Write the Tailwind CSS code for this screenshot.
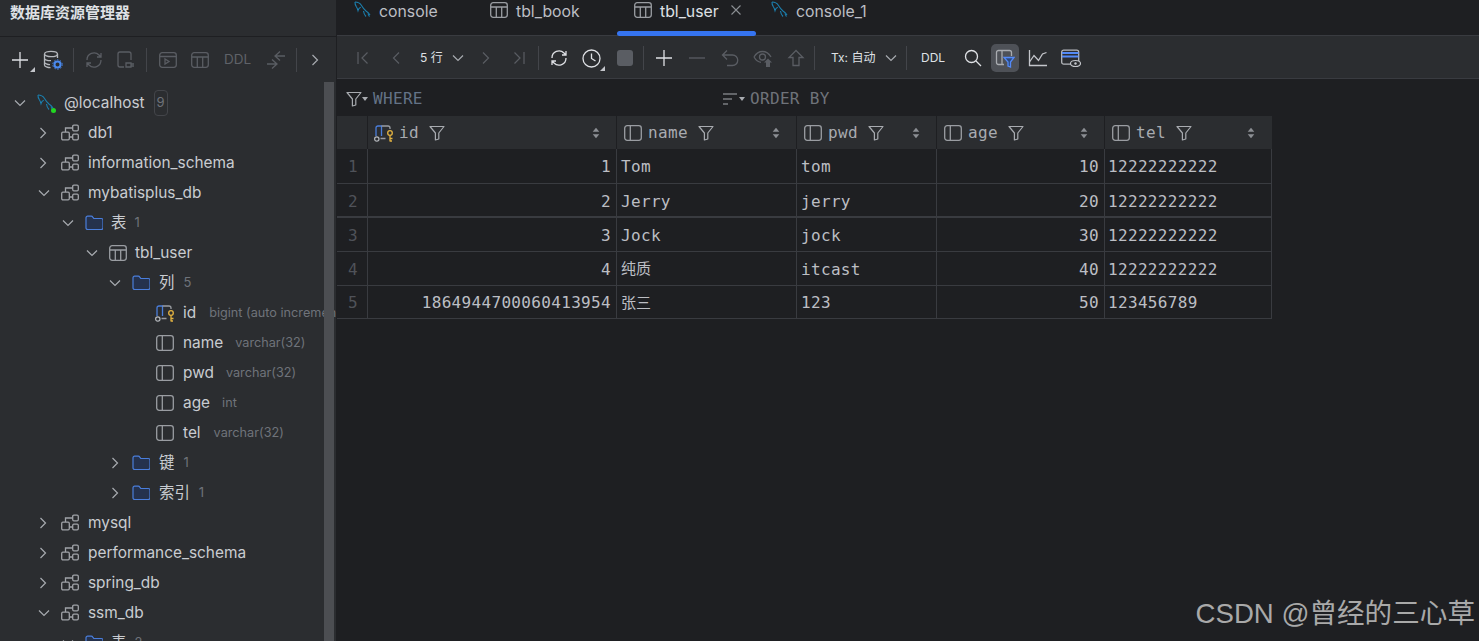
<!DOCTYPE html>
<html lang="zh">
<head>
<meta charset="utf-8">
<title>数据库资源管理器</title>
<script src="https://cdn.jsdelivr.net/npm/@tailwindcss/browser@4"></script>
</head>
<body class="m-0 bg-[#1e1f22]">
<svg width="0" height="0" class="absolute">
  <defs>
    <symbol id="chevD" viewBox="0 0 12 12"><path d="M1 3.500 6 8.500 11 3.500" fill="none" stroke="#a8abb0" stroke-width="1.200"/></symbol>
    <symbol id="chevR" viewBox="0 0 12 12"><path d="M3.500 1 8.500 6 3.500 11" fill="none" stroke="#a8abb0" stroke-width="1.200"/></symbol>
    <symbol id="schema" viewBox="0 0 18 18" fill="none" stroke="#a0a3a8" stroke-width="1.300"><rect x=".7" y="8.200" width="7.600" height="7.600" rx="1.200"/><rect x="11.700" y="1.200" width="5.600" height="5.600" rx="1.200"/><rect x="11.700" y="10.200" width="5.600" height="5.600" rx="1.200"/><path d="M4.500 8V4h7M8.300 13h3.400"/></symbol>
    <symbol id="folder" viewBox="0 0 18 18"><path d="M1 4c0-1 .7-1.800 1.700-1.800h3.600c.7 0 1.100.3 1.500.9l1 1.400h7.500c.9 0 1.700.7 1.700 1.700v7.600c0 1-.8 1.700-1.700 1.700H2.700C1.700 15.500 1 14.800 1 13.800Z" fill="#25324d" stroke="#4a7edb" stroke-width="1.200"/></symbol>
    <symbol id="table" viewBox="0 0 18 18" fill="none" stroke="#9a9da2" stroke-width="1.300"><rect x=".7" y="1.700" width="16.600" height="14.600" rx="2.500"/><path d="M1 6h16M6.300 6v10M11.700 6v10"/></symbol>
    <symbol id="column" viewBox="0 0 18 18" fill="none" stroke="#9a9da2" stroke-width="1.300"><rect x=".7" y="1.700" width="16.600" height="14.600" rx="2.500"/><path d="M6.300 2v14"/></symbol>
    <symbol id="pk" viewBox="0 0 20 18" fill="none"><path d="M2 12V4c0-1.300 .8-2 2-2h3.500v10" stroke="#4a7edb" stroke-width="1.300"/><path d="M7.500 2H14c1.200 0 2 .7 2 2v1M6.500 14.500h5" stroke="#9a9da2" stroke-width="1.300"/><circle cx="2.800" cy="15" r="2.200" stroke="#b5b8bd" stroke-width="1.200"/><circle cx="16" cy="9" r="2.300" stroke="#e3b341" stroke-width="1.300"/><path d="M16 11.500V17.500M16 14.500h2.500M16 17h2" stroke="#e3b341" stroke-width="1.300"/></symbol>
    <symbol id="dolphin" viewBox="0 0 18 18" fill="none" stroke="#1b7fae" stroke-width="1.100"><path d="M1 1c3 0 5 1 6.500 3.500 1.200 2 2.500 4 4.500 5.500 1.500 1 2.800 2 4 4"/><path d="M1 1c-.2 2 .5 3.500 1.500 5 .7 1 1.200 2.300 1.500 3.500.5-1.800 1.200-2.800 2.800-3.200M9.500 10c.3 2.500 1 4 2.500 5.500M14 12.500c.3 1.300 .8 2.300 1.500 3"/></symbol>
    <symbol id="filter" viewBox="0 0 16 16"><path d="M1 1.500h14L9.800 8v6L6.400 15V8Z" fill="none" stroke="#a8abb0" stroke-width="1.200" stroke-linejoin="round"/></symbol>
    <symbol id="sort" viewBox="0 0 8 12"><path d="M4 .8 7.300 4.800H.7ZM4 11.200 .7 7.200h6.600Z" fill="#8c8f94"/></symbol>
    <symbol id="corner" viewBox="0 0 5 5"><path d="M5 0V5H0Z" fill="#c4c6cb"/></symbol>
  </defs>
</svg>

<div class="relative flex h-[641px] w-[1479px] overflow-hidden bg-[#1e1f22] font-['Inter','Noto_Sans_CJK_SC',sans-serif] text-[15.400px] text-[#c9ccd1]">

  <!-- sidebar -->
  <aside class="relative flex h-full w-[337px] shrink-0 flex-col overflow-hidden border-r border-[#1e1f22] bg-[#2b2d30]">
    <div class="flex h-[37px] shrink-0 border-b border-[#1e1f22] pl-[10px] pt-[3px] text-[15px] leading-[20px] font-semibold text-[#dfe1e5]">数据库资源管理器</div>
    <div class="flex h-[46px] shrink-0 items-center pl-[8px]">
      <span class="relative flex w-[24px] justify-center">
        <svg class="h-[18px] w-[18px]" viewBox="0 0 18 18"><path d="M9 1v16M1 9h16" stroke="#dfe1e5" stroke-width="1.300"/></svg>
        <svg class="absolute right-[-3px] bottom-[-3px] h-[5px] w-[5px]"><use href="#corner"/></svg>
      </span>
      <span class="ml-[8px] flex w-[26px] justify-center">
        <svg class="h-[20px] w-[20px]" viewBox="0 0 20 20" fill="none"><ellipse cx="8" cy="4" rx="6.500" ry="2.700" stroke="#b5b8bd" stroke-width="1.300"/><path d="M1.500 4v11c0 1.500 3 2.700 6 2.700M14.500 4v4M1.500 8c0 1.500 3 2.700 6.500 2.700M1.500 12c0 1.500 3 2.700 5.500 2.700" stroke="#b5b8bd" stroke-width="1.300"/><circle cx="14.500" cy="14.500" r="3" stroke="#4a8af0" stroke-width="2"/><circle cx="14.500" cy="14.500" r="4.700" stroke="#4a8af0" stroke-width="1" stroke-dasharray="1.500 1.500"/></svg>
      </span>
      <span class="ml-[7px] mr-[8px] h-[24px] w-px bg-[#43454a]"></span>
      <span class="flex w-[24px] justify-center">
        <svg class="h-[20px] w-[20px]" viewBox="0 0 20 20" fill="none" stroke="#5a5d63" stroke-width="1.300"><path d="M3 10a7 7 0 0 1 12-5l2 2M17 10a7 7 0 0 1-12 5l-2-2M17 3v4h-4M3 17v-4h4"/></svg>
      </span>
      <span class="ml-[8px] flex w-[24px] justify-center">
        <svg class="h-[20px] w-[20px]" viewBox="0 0 20 20" fill="none" stroke="#5a5d63" stroke-width="1.300"><path d="M8 17H4c-1.200 0-2-.8-2-2V4c0-1.200 .8-2 2-2h9c1.200 0 2 .8 2 2v6"/><path d="M10 13h5v4h-5zM15 14h3M15 16h3"/></svg>
      </span>
      <span class="mx-[8px] h-[24px] w-px bg-[#43454a]"></span>
      <span class="flex w-[26px] justify-center">
        <svg class="h-[18px] w-[18px]" viewBox="0 0 18 18" fill="none" stroke="#5a5d63" stroke-width="1.300"><rect x=".7" y="1.700" width="16.600" height="14.600" rx="2.500"/><path d="M1 5.500h16M6 8v5l4-2.500Z"/></svg>
      </span>
      <span class="ml-[6px] flex w-[26px] justify-center">
        <svg class="h-[18px] w-[18px]" viewBox="0 0 18 18" fill="none" stroke="#5a5d63" stroke-width="1.300"><rect x=".7" y="1.700" width="16.600" height="14.600" rx="2.500"/><path d="M1 6h16M6.300 6v10M11.700 6v10"/></svg>
      </span>
      <span class="ml-[11px] text-[13.500px] leading-none text-[#5f6268]">DDL</span>
      <span class="ml-[13px] flex w-[24px] justify-center">
        <svg class="h-[20px] w-[20px]" viewBox="0 0 20 20" fill="none" stroke="#5a5d63" stroke-width="1.300"><path d="M9 6h10M14 1.500 9 6l5 4.500M1 14h10M6 9.500 11 14l-5 4.500"/></svg>
      </span>
      <span class="ml-[8px] h-[24px] w-px bg-[#43454a]"></span>
      <span class="ml-[6px] flex w-[24px] justify-center"><svg class="h-[12px] w-[12px]"><use href="#chevR"/></svg></span>
    </div>

    <div class="flex flex-col pt-[5px]">
      <div class="flex h-[30px] shrink-0 items-center whitespace-nowrap pl-[14px]"><svg class="h-[12px] w-[12px] shrink-0"><use href="#chevD"/></svg>
        <span class="relative ml-[11px] h-[18px] w-[18px] shrink-0"><svg class="h-[18px] w-[18px]"><use href="#dolphin"/></svg><span class="absolute right-[-1px] bottom-[-1px] h-[5px] w-[5px] rounded-full bg-[#22d622]"></span></span>
        <span class="ml-[9px]">@localhost</span><span class="ml-[9px] flex h-[26px] w-[14px] items-center justify-center rounded-[4px] border border-[#43454a] text-[13px] text-[#6f737a]">9</span></div>
      <div class="flex h-[30px] shrink-0 items-center whitespace-nowrap pl-[38px]"><svg class="h-[12px] w-[12px] shrink-0 -translate-x-[1px]"><use href="#chevR"/></svg><svg class="ml-[11px] h-[18px] w-[18px] shrink-0"><use href="#schema"/></svg><span class="ml-[9px]">db1</span></div>
      <div class="flex h-[30px] shrink-0 items-center whitespace-nowrap pl-[38px]"><svg class="h-[12px] w-[12px] shrink-0 -translate-x-[1px]"><use href="#chevR"/></svg><svg class="ml-[11px] h-[18px] w-[18px] shrink-0"><use href="#schema"/></svg><span class="ml-[9px]">information_schema</span></div>
      <div class="flex h-[30px] shrink-0 items-center whitespace-nowrap pl-[38px]"><svg class="h-[12px] w-[12px] shrink-0"><use href="#chevD"/></svg><svg class="ml-[11px] h-[18px] w-[18px] shrink-0"><use href="#schema"/></svg><span class="ml-[9px]">mybatisplus_db</span></div>
      <div class="flex h-[30px] shrink-0 items-center whitespace-nowrap pl-[62px]"><svg class="h-[12px] w-[12px] shrink-0"><use href="#chevD"/></svg><svg class="ml-[11px] h-[18px] w-[18px] shrink-0"><use href="#folder"/></svg><span class="ml-[8px]">表</span><span class="ml-[8px] text-[13px] text-[#6f737a]">1</span></div>
      <div class="flex h-[30px] shrink-0 items-center whitespace-nowrap pl-[86px]"><svg class="h-[12px] w-[12px] shrink-0"><use href="#chevD"/></svg><svg class="ml-[11px] h-[18px] w-[18px] shrink-0"><use href="#table"/></svg><span class="ml-[8px]">tbl_user</span></div>
      <div class="flex h-[30px] shrink-0 items-center whitespace-nowrap pl-[109px]"><svg class="h-[12px] w-[12px] shrink-0"><use href="#chevD"/></svg><svg class="ml-[11px] h-[18px] w-[18px] shrink-0"><use href="#folder"/></svg><span class="ml-[9px]">列</span><span class="ml-[9px] text-[13px] text-[#6f737a]">5</span></div>
      <div class="flex h-[30px] shrink-0 items-center whitespace-nowrap pl-[155px]"><svg class="h-[18px] w-[20px] shrink-0"><use href="#pk"/></svg><span class="ml-[8px]">id</span><span class="ml-[13px] text-[12.700px] text-[#6f737a]">bigint (auto increment)</span></div>
      <div class="flex h-[30px] shrink-0 items-center whitespace-nowrap pl-[156px]"><svg class="h-[18px] w-[18px] shrink-0"><use href="#column"/></svg><span class="ml-[9px]">name</span><span class="ml-[12px] text-[12.700px] text-[#6f737a]">varchar(32)</span></div>
      <div class="flex h-[30px] shrink-0 items-center whitespace-nowrap pl-[156px]"><svg class="h-[18px] w-[18px] shrink-0"><use href="#column"/></svg><span class="ml-[9px]">pwd</span><span class="ml-[12px] text-[12.700px] text-[#6f737a]">varchar(32)</span></div>
      <div class="flex h-[30px] shrink-0 items-center whitespace-nowrap pl-[156px]"><svg class="h-[18px] w-[18px] shrink-0"><use href="#column"/></svg><span class="ml-[9px]">age</span><span class="ml-[12px] text-[12.700px] text-[#6f737a]">int</span></div>
      <div class="flex h-[30px] shrink-0 items-center whitespace-nowrap pl-[156px]"><svg class="h-[18px] w-[18px] shrink-0"><use href="#column"/></svg><span class="ml-[9px]">tel</span><span class="ml-[13px] text-[12.700px] text-[#6f737a]">varchar(32)</span></div>
      <div class="flex h-[30px] shrink-0 items-center whitespace-nowrap pl-[109px]"><svg class="h-[12px] w-[12px] shrink-0"><use href="#chevR"/></svg><svg class="ml-[11px] h-[18px] w-[18px] shrink-0"><use href="#folder"/></svg><span class="ml-[9px]">键</span><span class="ml-[9px] text-[13px] text-[#6f737a]">1</span></div>
      <div class="flex h-[30px] shrink-0 items-center whitespace-nowrap pl-[109px]"><svg class="h-[12px] w-[12px] shrink-0"><use href="#chevR"/></svg><svg class="ml-[11px] h-[18px] w-[18px] shrink-0"><use href="#folder"/></svg><span class="ml-[9px]">索引</span><span class="ml-[9px] text-[13px] text-[#6f737a]">1</span></div>
      <div class="flex h-[30px] shrink-0 items-center whitespace-nowrap pl-[38px]"><svg class="h-[12px] w-[12px] shrink-0 -translate-x-[1px]"><use href="#chevR"/></svg><svg class="ml-[11px] h-[18px] w-[18px] shrink-0"><use href="#schema"/></svg><span class="ml-[9px]">mysql</span></div>
      <div class="flex h-[30px] shrink-0 items-center whitespace-nowrap pl-[38px]"><svg class="h-[12px] w-[12px] shrink-0 -translate-x-[1px]"><use href="#chevR"/></svg><svg class="ml-[11px] h-[18px] w-[18px] shrink-0"><use href="#schema"/></svg><span class="ml-[9px]">performance_schema</span></div>
      <div class="flex h-[30px] shrink-0 items-center whitespace-nowrap pl-[38px]"><svg class="h-[12px] w-[12px] shrink-0 -translate-x-[1px]"><use href="#chevR"/></svg><svg class="ml-[11px] h-[18px] w-[18px] shrink-0"><use href="#schema"/></svg><span class="ml-[9px]">spring_db</span></div>
      <div class="flex h-[30px] shrink-0 items-center whitespace-nowrap pl-[38px]"><svg class="h-[12px] w-[12px] shrink-0"><use href="#chevD"/></svg><svg class="ml-[11px] h-[18px] w-[18px] shrink-0"><use href="#schema"/></svg><span class="ml-[9px]">ssm_db</span></div>
      <div class="flex h-[30px] shrink-0 items-center whitespace-nowrap pl-[62px]"><svg class="h-[12px] w-[12px] shrink-0"><use href="#chevD"/></svg><svg class="ml-[11px] h-[18px] w-[18px] shrink-0"><use href="#folder"/></svg><span class="ml-[8px]">表</span><span class="ml-[8px] text-[13px] text-[#6f737a]">2</span></div>
    </div>
    <!-- scrollbar over the tree -->
    <div class="absolute top-[82px] right-[2px] bottom-0 w-[10px] bg-[#4c4e52]"></div>
  </aside>

  <!-- main -->
  <main class="flex min-w-0 flex-1 flex-col">
    <!-- tabs -->
    <div class="flex h-[36px] shrink-0 border-b border-[#393b40] text-[15.800px] text-[#bcbec4]">
      <div class="flex h-[35px] w-[136px] shrink-0 items-start pt-[2px] pl-[17px]"><svg class="mt-[-1px] h-[18px] w-[18px] shrink-0"><use href="#dolphin"/></svg><span class="ml-[7px] leading-[20px]">console</span></div>
      <div class="flex h-[35px] w-[144px] shrink-0 items-start pt-[2px] pl-[17px]"><svg class="mt-[-1px] h-[18px] w-[18px] shrink-0"><use href="#table"/></svg><span class="ml-[8px] leading-[20px]">tbl_book</span></div>
      <div class="relative flex h-[35px] w-[139px] shrink-0 items-start pt-[2px] pl-[17px] text-[#dfe1e5]"><svg class="mt-[-1px] h-[18px] w-[18px] shrink-0"><use href="#table"/></svg><span class="ml-[8px] leading-[20px]">tbl_user</span>
        <svg class="absolute top-[5px] left-[114px] h-[10px] w-[10px]" viewBox="0 0 10 10"><path d="M.5.5l9 9M9.500.5l-9 9" stroke="#8c8f94" stroke-width="1.100"/></svg>
        <span class="absolute bottom-[-1px] left-0 h-[5px] w-[139px] rounded-[3px] bg-[#3574f0]"></span></div>
      <div class="flex h-[35px] shrink-0 items-start pt-[2px] pl-[15px]"><svg class="mt-[-1px] h-[18px] w-[18px] shrink-0"><use href="#dolphin"/></svg><span class="ml-[7px] leading-[20px]">console_1</span></div>
    </div>

    <!-- toolbar -->
    <div class="flex h-[43px] shrink-0 items-center border-b border-[#393b40] bg-[#2b2d30] pt-[2px] pl-[9px] text-[12px] text-[#dfe1e5]">
      <span class="flex w-[33px] justify-center"><svg class="h-[14px] w-[14px]" viewBox="0 0 14 14" fill="none" stroke="#5a5d63" stroke-width="1.200"><path d="M2 1v12M11.500 1.500 6 7l5.500 5.500"/></svg></span>
      <span class="flex w-[33px] justify-center"><svg class="h-[14px] w-[14px]" viewBox="0 0 14 14" fill="none" stroke="#5a5d63" stroke-width="1.200"><path d="M10 1.500 4.500 7l5.500 5.500"/></svg></span>
      <span class="flex w-[57px] items-center whitespace-nowrap pl-[8px]">5 行<svg class="ml-[9px] h-[12px] w-[12px]"><use href="#chevD"/></svg></span>
      <span class="flex w-[33px] justify-center"><svg class="h-[14px] w-[14px]" viewBox="0 0 14 14" fill="none" stroke="#5a5d63" stroke-width="1.200"><path d="M4 1.500 9.500 7 4 12.500"/></svg></span>
      <span class="flex w-[33px] justify-center"><svg class="h-[14px] w-[14px]" viewBox="0 0 14 14" fill="none" stroke="#5a5d63" stroke-width="1.200"><path d="M12 1v12M2.500 1.500 8 7l-5.500 5.500"/></svg></span>
      <span class="mx-[3px] h-[24px] w-px bg-[#43454a]"></span>
      <span class="flex w-[33px] justify-center"><svg class="h-[20px] w-[20px]" viewBox="0 0 20 20" fill="none" stroke="#dfe1e5" stroke-width="1.300"><path d="M3 10a7 7 0 0 1 12-5l2 2M17 10a7 7 0 0 1-12 5l-2-2M17 3v4h-4M3 17v-4h4"/></svg></span>
      <span class="relative flex w-[33px] justify-center"><svg class="h-[19px] w-[19px]" viewBox="0 0 19 19" fill="none" stroke="#dfe1e5" stroke-width="1.300"><circle cx="9.500" cy="9.500" r="8.500"/><path d="M9.500 4.500v5l4 2.500"/></svg><svg class="absolute right-[3px] bottom-[-3px] h-[5px] w-[5px]"><use href="#corner"/></svg></span>
      <span class="flex w-[33px] justify-center"><span class="h-[16px] w-[16px] rounded-[3px] bg-[#5a5d63]"></span></span>
      <span class="ml-[2px] mr-[3px] h-[24px] w-px bg-[#43454a]"></span>
      <span class="flex w-[33px] justify-center"><svg class="h-[18px] w-[18px]" viewBox="0 0 18 18"><path d="M9 1v16M1 9h16" stroke="#dfe1e5" stroke-width="1.300"/></svg></span>
      <span class="flex w-[33px] justify-center"><svg class="h-[18px] w-[18px]" viewBox="0 0 18 18"><path d="M1 9h16" stroke="#5a5d63" stroke-width="1.300"/></svg></span>
      <span class="flex w-[33px] justify-center"><svg class="h-[18px] w-[18px]" viewBox="0 0 18 18" fill="none" stroke="#5a5d63" stroke-width="1.300"><path d="M6 1.500 1.500 6 6 10.500M2 6h9.500a5 5 0 0 1 0 10.500H6"/></svg></span>
      <span class="flex w-[33px] justify-center"><svg class="h-[20px] w-[20px]" viewBox="0 0 20 20" fill="none" stroke="#5a5d63" stroke-width="1.300"><path d="M1 9c2-3.500 5-5.500 8.500-5.500S16 5.500 18 9"/><path d="M1 9c2 3.500 4.500 5 7 5.300"/><circle cx="9.500" cy="9" r="3"/><path d="M15 10.500 19 14.500H17V19H13V14.500H11Z" fill="#5a5d63" stroke="none"/></svg></span>
      <span class="flex w-[33px] justify-center"><svg class="h-[18px] w-[18px]" viewBox="0 0 18 18" fill="none" stroke="#5a5d63" stroke-width="1.300"><path d="M9 1.500 2 8.500h4v8h6v-8h4Z"/></svg></span>
      <span class="mx-[2px] h-[24px] w-px bg-[#43454a]"></span>
      <span class="flex w-[84px] items-center whitespace-nowrap pl-[14px]">Tx: 自动<svg class="ml-[10px] h-[12px] w-[12px]"><use href="#chevD"/></svg></span>
      <span class="mx-[5px] h-[24px] w-px bg-[#43454a]"></span>
      <span class="w-[44px] pl-[9px]">DDL</span>
      <span class="flex w-[33px] justify-center"><svg class="h-[18px] w-[18px]" viewBox="0 0 18 18" fill="none" stroke="#dfe1e5" stroke-width="1.300"><circle cx="7.500" cy="7.500" r="6"/><path d="m12 12 5 5"/></svg></span>
      <span class="ml-[2px] flex h-[28px] w-[28px] items-center justify-center rounded-[5px] bg-[#4e5157]"><svg class="h-[20px] w-[20px]" viewBox="0 0 20 20" fill="none"><path d="M9 16.500H3.500C2 16.500 1.500 15.500 1.500 14.500V4.500C1.500 3 2.500 2.500 3.500 2.500h11c1.500 0 2 1 2 2V8M7 3v13.500" stroke="#a8abb0" stroke-width="1.300"/><path d="M9 9.500h10L15.500 14v5L13 18v-4Z" fill="#2b4a80" stroke="#548af7" stroke-width="1.300"/></svg></span>
      <span class="ml-[3px] flex w-[32px] justify-center"><svg class="h-[20px] w-[20px]" viewBox="0 0 20 20" fill="none" stroke="#c4c6cb" stroke-width="1.300"><path d="M1.500 2v15.500H19"/><path d="M1.500 14 6 7.500l4.500 5 4-6.500 4-1.500"/></svg></span>
      <span class="flex w-[33px] justify-center"><svg class="h-[20px] w-[20px]" viewBox="0 0 20 20" fill="none"><rect x=".7" y="2.200" width="17" height="14" rx="2" stroke="#b5b8bd" stroke-width="1.300"/><path d="M1 5h16.500M1 8.500h16.500" stroke="#548af7" stroke-width="2"/><ellipse cx="14.500" cy="15.500" rx="5" ry="3" fill="#2b2d30" stroke="#c4c6cb" stroke-width="1.200"/><circle cx="14.500" cy="15.500" r="1.200" fill="#c4c6cb"/></svg></span>
    </div>

    <!-- filters -->
    <div class="flex h-[37px] shrink-0 items-center pt-[2px] font-['DejaVu_Sans_Mono','Noto_Sans_CJK_SC',monospace] text-[16px] tracking-[0.33px]">
      <div class="flex w-[385px] items-center pl-[9px]">
        <svg class="h-[16px] w-[16px]" viewBox="0 0 16 16"><use href="#filter"/></svg>
        <svg class="h-[4px] w-[6px]" viewBox="0 0 6 4"><path d="M0 0h6L3 4Z" fill="#a8abb0"/></svg>
        <span class="ml-[5px] text-[#647387]">WHERE</span>
      </div>
      <div class="flex items-center">
        <svg class="h-[14px] w-[16px]" viewBox="0 0 16 14"><path d="M1 2h14M1 7h9M1 12h5" stroke="#a8abb0" stroke-width="1.200"/></svg>
        <svg class="ml-[1px] h-[4px] w-[6px]" viewBox="0 0 6 4"><path d="M0 0h6L3 4Z" fill="#a8abb0"/></svg>
        <span class="ml-[5px] text-[#6f737a]">ORDER BY</span>
      </div>
    </div>

    <!-- grid -->
    <div class="grid w-[935px] grid-cols-[31px_249px_180px_140px_168px_167px] grid-rows-[33px_35px_34px_34px_34px_33px] font-['DejaVu_Sans_Mono','Noto_Sans_CJK_SC',monospace] text-[16px] tracking-[0.33px] text-[#bcbec4]">
      <div class="border-r border-[#1e1f22] bg-[#2b2d30]"></div>
      <div class="flex items-center border-r border-[#1e1f22] bg-[#2b2d30] pl-[6px] pr-[16px]"><svg class="h-[18px] w-[20px] shrink-0"><use href="#pk"/></svg><span class="ml-[5px] mt-[1px] text-[#a8abb0]">id</span><svg class="ml-[10px] h-[16px] w-[16px]"><use href="#filter"/></svg><svg class="ml-auto h-[12px] w-[8px]"><use href="#sort"/></svg></div>
      <div class="flex items-center border-r border-[#1e1f22] bg-[#2b2d30] pl-[7px] pr-[16px]"><svg class="h-[18px] w-[18px] shrink-0"><use href="#column"/></svg><span class="ml-[6px] mt-[1px] text-[#a8abb0]">name</span><svg class="ml-[10px] h-[16px] w-[16px]"><use href="#filter"/></svg><svg class="ml-auto h-[12px] w-[8px]"><use href="#sort"/></svg></div>
      <div class="flex items-center border-r border-[#1e1f22] bg-[#2b2d30] pl-[7px] pr-[16px]"><svg class="h-[18px] w-[18px] shrink-0"><use href="#column"/></svg><span class="ml-[6px] mt-[1px] text-[#a8abb0]">pwd</span><svg class="ml-[10px] h-[16px] w-[16px]"><use href="#filter"/></svg><svg class="ml-auto h-[12px] w-[8px]"><use href="#sort"/></svg></div>
      <div class="flex items-center border-r border-[#1e1f22] bg-[#2b2d30] pl-[7px] pr-[16px]"><svg class="h-[18px] w-[18px] shrink-0"><use href="#column"/></svg><span class="ml-[6px] mt-[1px] text-[#a8abb0]">age</span><svg class="ml-[10px] h-[16px] w-[16px]"><use href="#filter"/></svg><svg class="ml-auto h-[12px] w-[8px]"><use href="#sort"/></svg></div>
      <div class="flex items-center bg-[#2b2d30] pl-[7px] pr-[17px]"><svg class="h-[18px] w-[18px] shrink-0"><use href="#column"/></svg><span class="ml-[6px] mt-[1px] text-[#a8abb0]">tel</span><svg class="ml-[10px] h-[16px] w-[16px]"><use href="#filter"/></svg><svg class="ml-auto h-[12px] w-[8px]"><use href="#sort"/></svg></div>

      <div class="flex items-center border-r border-b border-[#393b40] pt-[2px] pl-[11px] text-[#4f5259]">1</div>
      <div class="flex items-center justify-end border-r border-b border-[#393b40] pt-[2px] pr-[5px]">1</div>
      <div class="flex items-center border-r border-b border-[#393b40] pt-[2px] pl-[4px]">Tom</div>
      <div class="flex items-center border-r border-b border-[#393b40] pt-[2px] pl-[4px]">tom</div>
      <div class="flex items-center justify-end border-r border-b border-[#393b40] pt-[2px] pr-[5px]">10</div>
      <div class="flex items-center border-r border-b border-[#393b40] pt-[2px] pl-[3px]">12222222222</div>

      <div class="flex items-center border-r border-b-2 border-[#393b40] pt-[3px] pl-[11px] text-[#4f5259]">2</div>
      <div class="flex items-center justify-end border-r border-b-2 border-[#393b40] pt-[3px] pr-[5px]">2</div>
      <div class="flex items-center border-r border-b-2 border-[#393b40] pt-[3px] pl-[4px]">Jerry</div>
      <div class="flex items-center border-r border-b-2 border-[#393b40] pt-[3px] pl-[4px]">jerry</div>
      <div class="flex items-center justify-end border-r border-b-2 border-[#393b40] pt-[3px] pr-[5px]">20</div>
      <div class="flex items-center border-r border-b-2 border-[#393b40] pt-[3px] pl-[3px]">12222222222</div>

      <div class="flex items-center border-r border-b border-[#393b40] pt-[2px] pl-[11px] text-[#4f5259]">3</div>
      <div class="flex items-center justify-end border-r border-b border-[#393b40] pt-[2px] pr-[5px]">3</div>
      <div class="flex items-center border-r border-b border-[#393b40] pt-[2px] pl-[4px]">Jock</div>
      <div class="flex items-center border-r border-b border-[#393b40] pt-[2px] pl-[4px]">jock</div>
      <div class="flex items-center justify-end border-r border-b border-[#393b40] pt-[2px] pr-[5px]">30</div>
      <div class="flex items-center border-r border-b border-[#393b40] pt-[2px] pl-[3px]">12222222222</div>

      <div class="flex items-center border-r border-b border-[#393b40] pt-[2px] pl-[11px] text-[#4f5259]">4</div>
      <div class="flex items-center justify-end border-r border-b border-[#393b40] pt-[2px] pr-[5px]">4</div>
      <div class="flex items-center border-r border-b border-[#393b40] pt-[2px] pl-[4px] text-[15px] tracking-normal">纯质</div>
      <div class="flex items-center border-r border-b border-[#393b40] pt-[2px] pl-[4px]">itcast</div>
      <div class="flex items-center justify-end border-r border-b border-[#393b40] pt-[2px] pr-[5px]">40</div>
      <div class="flex items-center border-r border-b border-[#393b40] pt-[2px] pl-[3px]">12222222222</div>

      <div class="flex items-center border-r border-b border-[#393b40] pt-[2px] pl-[11px] text-[#4f5259]">5</div>
      <div class="flex items-center justify-end border-r border-b border-[#393b40] pt-[2px] pr-[5px]">1864944700060413954</div>
      <div class="flex items-center border-r border-b border-[#393b40] pt-[2px] pl-[4px] text-[15px] tracking-normal">张三</div>
      <div class="flex items-center border-r border-b border-[#393b40] pt-[2px] pl-[4px]">123</div>
      <div class="flex items-center justify-end border-r border-b border-[#393b40] pt-[2px] pr-[5px]">50</div>
      <div class="flex items-center border-r border-b border-[#393b40] pt-[2px] pl-[3px]">123456789</div>
    </div>
  </main>

  <!-- watermark -->
  <div class="absolute right-[4px] bottom-[9px] whitespace-nowrap font-['Liberation_Sans','Noto_Sans_CJK_SC',sans-serif] text-[27.600px] leading-[36px] text-[#a9a9a9]">CSDN @曾经的三心草</div>
</div>
</body>
</html>
